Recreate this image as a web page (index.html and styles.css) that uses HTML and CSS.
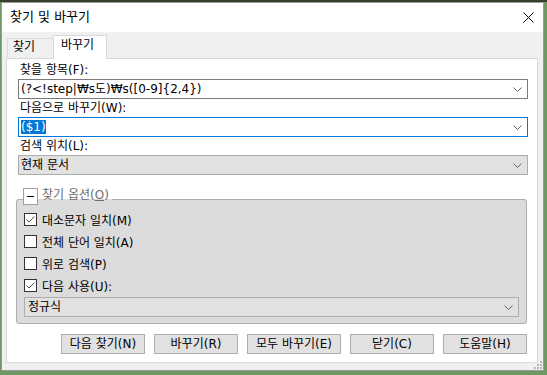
FILE: index.html
```html
<!DOCTYPE html>
<html lang="ko">
<head>
    <meta charset="UTF-8">
    <title>찾기 및 바꾸기</title>
    <link rel="stylesheet" href="styles.css">
</head>
<body>
    <div class="window">
        <div class="titlebar">
            <span class="title">찾기 및 바꾸기</span>
            <svg class="close" width="11" height="11" viewBox="0 0 11 11">
                <path d="M0.5 0.5L10.5 10.5M10.5 0.5L0.5 10.5" stroke="#000" stroke-width="1"/>
            </svg>
        </div>

        <div class="content">
            <div class="tabs">
                <div class="tab first">찾기</div>
                <div class="tab active">바꾸기</div>
            </div>

            <div class="panel">
                <!-- find / replace fields -->
                <div class="label">찾을 항목(F):</div>
                <div class="combo">
                    <span class="combo-text">(?&lt;!step|₩s도)₩s([0-9]{2,4})</span>
                    <svg class="arrow" width="9" height="5" viewBox="0 0 9 5"><polyline points="0.5,0.5 4.5,4.5 8.5,0.5" fill="none" stroke="#606060"/></svg>
                </div>

                <div class="label">다음으로 바꾸기(W):</div>
                <div class="combo focused">
                    <span class="combo-text"><span class="selected">($1)</span></span>
                    <svg class="arrow" width="9" height="5" viewBox="0 0 9 5"><polyline points="0.5,0.5 4.5,4.5 8.5,0.5" fill="none" stroke="#606060"/></svg>
                </div>

                <div class="label">검색 위치(L):</div>
                <div class="combo list">
                    <span class="combo-text">현재 문서</span>
                    <svg class="arrow" width="9" height="5" viewBox="0 0 9 5"><polyline points="0.5,0.5 4.5,4.5 8.5,0.5" fill="none" stroke="#606060"/></svg>
                </div>

                <!-- options group -->
                <fieldset class="options">
                    <legend>
                        <span class="collapse"><span class="minus"></span></span>
                        <span class="legend-text">찾기 옵션(<u>O</u>)</span>
                    </legend>

                    <div class="check-row first-row">
                        <span class="checkbox">
                            <svg width="11" height="11" viewBox="0 0 11 11"><polyline points="1.5,5.5 4,8 9.5,2.5" fill="none" stroke="#555"/></svg>
                        </span>
                        대소문자 일치(M)
                    </div>
                    <div class="check-row">
                        <span class="checkbox"></span>
                        전체 단어 일치(A)
                    </div>
                    <div class="check-row">
                        <span class="checkbox"></span>
                        위로 검색(P)
                    </div>
                    <div class="check-row">
                        <span class="checkbox">
                            <svg width="11" height="11" viewBox="0 0 11 11"><polyline points="1.5,5.5 4,8 9.5,2.5" fill="none" stroke="#555"/></svg>
                        </span>
                        다음 사용(U):
                    </div>

                    <div class="combo list inner">
                        <span class="combo-text">정규식</span>
                        <svg class="arrow" width="9" height="5" viewBox="0 0 9 5"><polyline points="0.5,0.5 4.5,4.5 8.5,0.5" fill="none" stroke="#606060"/></svg>
                    </div>
                </fieldset>

                <div class="buttons">
                    <button class="btn">다음 찾기(N)</button>
                    <button class="btn">바꾸기(R)</button>
                    <button class="btn wide">모두 바꾸기(E)</button>
                    <button class="btn">닫기(C)</button>
                    <button class="btn">도움말(H)</button>
                </div>
            </div>
        </div>

        <svg class="grip" width="9" height="9" viewBox="0 0 9 9" fill="#b5b5b5">
            <rect x="7" y="1" width="2" height="2"/>
            <rect x="4" y="4" width="2" height="2"/>
            <rect x="7" y="4" width="2" height="2"/>
            <rect x="1" y="7" width="2" height="2"/>
            <rect x="4" y="7" width="2" height="2"/>
            <rect x="7" y="7" width="2" height="2"/>
        </svg>
    </div>
</body>
</html>
```

FILE: styles.css
```css
* {
    margin: 0;
    padding: 0;
    box-sizing: border-box;
}

body {
    font-family: "DejaVu Sans", "Noto Sans CJK KR", sans-serif;
    font-size: 12px;
    color: #000;
    background: linear-gradient(#34402c 0 2px, #6d9763 2px);
    height: 375px;
    overflow: hidden;
}

.window {
    position: relative;
    margin: 2px 0 0 1px;
    width: 543px;
    height: 369px;
    border: 1px solid #9a9a9a;
    background: #f0f0f0;
    display: flex;
    flex-direction: column;
}

.titlebar {
    height: 29px;
    background: #fff;
    display: flex;
    align-items: center;
    justify-content: space-between;
    padding: 0 9px 1px 8px;
}

.title {
    font-size: 13px;
    line-height: 16px;
}

.content {
    flex: 1;
    padding: 3px 5px 0 4px;
}

.tabs {
    display: flex;
    align-items: flex-end;
    height: 23px;
}

.tab {
    height: 20px;
    line-height: 17px;
    border: 1px solid #d9d9d9;
    border-bottom: none;
    background: #f0f0f0;
}

.tab.first {
    width: 47px;
    margin-left: 1px;
    padding-left: 5px;
}

.tab.active {
    position: relative;
    z-index: 1;
    width: 54px;
    height: 24px;
    margin-left: -1px;
    margin-bottom: -1px;
    padding-left: 7px;
    line-height: 18px;
    background: #fff;
}

.panel {
    background: #fff;
    border: 1px solid #d9d9d9;
    padding: 2px 9px 8px 11px;
}

.label {
    height: 18px;
    line-height: 18px;
    padding-left: 2px;
}

.combo {
    height: 20px;
    border: 1px solid #7a7a7a;
    background: #fff;
    display: flex;
    align-items: center;
    justify-content: space-between;
    padding: 0 5px 0 2px;
    line-height: 18px;
}

.combo.focused {
    border-color: #0078d7;
}

.combo.list {
    border-color: #adadad;
    background: #e1e1e1;
}

.combo-text {
    white-space: nowrap;
}

.selected {
    background: #0078d7;
    color: #fff;
}

.arrow {
    flex-shrink: 0;
}

.options {
    margin: 13px 1px 0 -2px;
    border: 1px solid #adadad;
    border-radius: 3px;
    background: #dcdcdc;
    padding: 0 7px 6px 7px;
}

.options legend {
    display: flex;
    align-items: flex-start;
    height: 22px;
    margin-left: -1px;
    padding: 0 3px 0 0;
}

.collapse {
    width: 15px;
    height: 17px;
    border: 1px solid #a0a0a0;
    background: #fff;
    display: flex;
    align-items: center;
    justify-content: center;
}

.minus {
    width: 7px;
    height: 1px;
    background: #000;
}

.legend-text {
    margin-left: 4px;
    line-height: 15px;
    color: #6d6d6d;
}

.check-row {
    height: 22px;
    display: flex;
    align-items: center;
    gap: 5px;
}

.check-row.first-row {
    margin-top: -2px;
}

.checkbox {
    width: 13px;
    height: 13px;
    border: 1px solid #333;
    background: #fff;
    display: flex;
    align-items: center;
    justify-content: center;
}

.combo.inner {
    margin-top: 1px;
    padding-left: 3px;
}

.buttons {
    display: flex;
    justify-content: flex-end;
    gap: 9px;
    margin: 10px 1px 0 0;
}

.btn {
    width: 84px;
    height: 20px;
    border: 1px solid #adadad;
    background: #e1e1e1;
    font-family: inherit;
    font-size: 12px;
    line-height: 18px;
    color: #000;
}

.btn.wide {
    width: 94px;
}

.grip {
    position: absolute;
    right: 1px;
    bottom: 1px;
}
```
